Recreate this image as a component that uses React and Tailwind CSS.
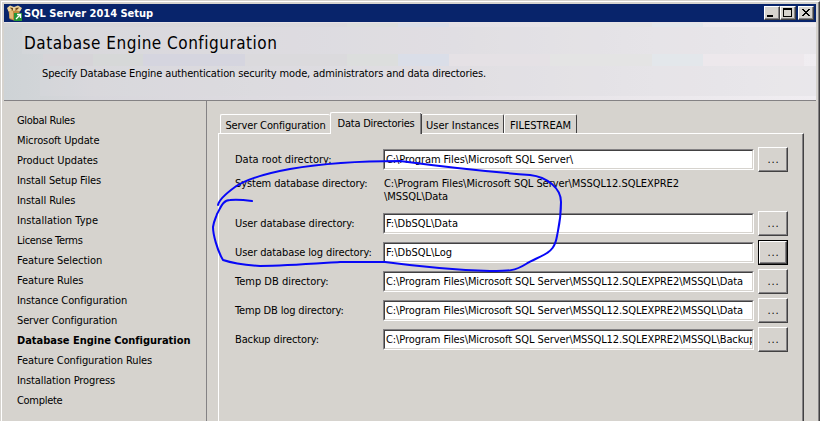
const STEPS = [
  ["Global Rules", "tracking-[-0.3px]"],
  ["Microsoft Update", "tracking-[-0.1px]"],
  ["Product Updates", "tracking-[-0.05px]"],
  ["Install Setup Files", "tracking-[-0.13px]"],
  ["Install Rules", "tracking-[-0.1px]"],
  ["Installation Type", "tracking-[0.03px]"],
  ["License Terms", "tracking-[-0.3px]"],
  ["Feature Selection", "tracking-[-0.05px]"],
  ["Feature Rules", "tracking-[-0.05px]"],
  ["Instance Configuration", "tracking-[-0.1px]"],
  ["Server Configuration", "tracking-[-0.13px]"],
  ["Database Engine Configuration", "font-bold tracking-[-0.02px]"],
  ["Feature Configuration Rules", "tracking-[-0.08px]"],
  ["Installation Progress", "tracking-[-0.1px]"],
  ["Complete", "tracking-[-0.3px]"],
];

const BASE = "C:\\Program Files\\Microsoft SQL Server\\";

const FIELDS = [
  { label: "User database directory:", labelStyle: "tracking-[-0.08px]", value: "F:\\DbSQL\\Data" },
  { label: "User database log directory:", labelStyle: "tracking-[-0.11px]", value: "F:\\DbSQL\\Log", focused: true },
  { label: "Temp DB directory:", value: BASE + "MSSQL12.SQLEXPRE2\\MSSQL\\Data", valueStyle: "tracking-[-0.09px]" },
  { label: "Temp DB log directory:", labelStyle: "tracking-[-0.15px]", value: BASE + "MSSQL12.SQLEXPRE2\\MSSQL\\Data", valueStyle: "tracking-[-0.09px]" },
  { label: "Backup directory:", labelStyle: "tracking-[-0.13px]", value: BASE + "MSSQL12.SQLEXPRE2\\MSSQL\\Backup", valueStyle: "tracking-[-0.09px]" },
];

function Bevel({ className = "", children }) {
  return (
    <div className={"border border-t-white border-l-white border-r-[#424142] border-b-[#424142] " + className}>
      <div className="flex h-full w-full items-center justify-center border-r border-b border-[#848284]">{children}</div>
    </div>
  );
}

function BrowseButton({ focused }) {
  return (
    <button className={"ml-1 h-[25px] w-[30px] shrink-0 " + (focused ? "border border-black" : "")}>
      <Bevel className="h-full w-full">
        <span className="pt-px pl-0.5 tracking-[0.85px]">...</span>
      </Bevel>
    </button>
  );
}

function Field({ label, labelStyle = "", value, valueStyle = "", focused }) {
  return (
    <div className="flex h-[25px] items-center">
      <label className={"w-[148px] shrink-0 whitespace-nowrap " + labelStyle}>{label}</label>
      <div className="h-[21px] w-[371px] border border-t-[#848284] border-l-[#848284] border-r-white border-b-white">
        <div className="flex h-full items-center overflow-hidden border border-t-[#424142] border-l-[#424142] border-r-[#d6d3ce] border-b-[#d6d3ce] bg-white pl-px">
          <span className={"w-full overflow-hidden whitespace-nowrap " + valueStyle}>{value}</span>
        </div>
      </div>
      <BrowseButton focused={focused} />
    </div>
  );
}

function Tab({ className, children }) {
  return (
    <div className={"flex h-[19px] items-center justify-center rounded-t-[2px] border-t border-white pt-0.5 whitespace-nowrap " + className}>
      {children}
    </div>
  );
}

function SetupIcon() {
  return (
    <svg width="15" height="16" viewBox="0 0 15 16" className="shrink-0">
      <path d="M1.500 5h11v9l-5.500 1.500L2.500 14z" fill="#c08a3e" />
      <path d="M2.500 6H6v8l-3.500-1z" fill="#e3b874" />
      <path d="M0 3l3-2.500L7 2l4-1.500L15 3l-2 3.500L8.500 5 7 6 5.500 5 1.500 6.500z" fill="#ead19a" />
      <path d="M3 2.500L6 3v2.500L4 4zM12 2.500L8.500 3v2.500L11 4z" fill="#6e4a1c" />
      <rect x="7" y="8" width="8" height="8" fill="#279538" />
      <path d="M9 14l4-4M10 9.500h3.500V13" fill="none" stroke="#fff" strokeWidth="1.300" />
    </svg>
  );
}

export default function App() {
  return (
    <div className="relative h-[421px] w-[820px] overflow-hidden bg-[#d6d3ce] pt-px pl-px font-['DejaVu_Sans_Condensed','DejaVu_Sans',sans-serif] text-[11px] leading-[13px] text-black">
      <div className="h-[420px] border-t border-r border-l border-t-white border-l-white border-r-[#424142]">
        <div className="h-full border-r border-[#848284] pt-0.5 pr-0.5 pl-0.5">
          <header className="flex h-[18px] items-center bg-[#08246b] pl-[3px] pr-0.5">
            <SetupIcon />
            <h1 className="ml-0.5 flex-1 text-[11px] font-bold text-white">SQL Server 2014 Setup</h1>
            <Bevel className="h-3.5 w-4 bg-[#d6d3ce]">
              <i className="mt-1.5 mr-1 h-0.5 w-1.5 bg-black" />
            </Bevel>
            <Bevel className="h-3.5 w-4 bg-[#d6d3ce]">
              <i className="h-[9px] w-[9px] border border-t-2 border-black" />
            </Bevel>
            <Bevel className="ml-0.5 h-3.5 w-4 bg-[#d6d3ce]">
              <svg width="8" height="7" viewBox="0 0 8 7" shapeRendering="crispEdges">
                <path d="M0 0h2v1h1v1h2V1h1V0h2v1H7v1H6v1H5v1h1v1h1v1h1v1H6V6H5V5H3v1H2v1H0V6h1V5h1V4h1V3H2V2H1V1H0z" />
              </svg>
            </Bevel>
          </header>

          <section className="relative h-[79px] border-t border-b border-t-[#e7e3e7] border-b-[#848284] bg-[linear-gradient(90deg,#ced3d6_0px,#d2d5d8_40px,#d8d7dc_90px,#dddbe0_250px,#e3e0e5_450px,#eae7eb_620px,#f0edf1_812px)]">
            <div className="flex h-full flex-col">
              <div className="flex h-1">
                <i className="w-[343px] bg-[#d6d6d8]/40" />
                <i className="w-[51px] bg-[#dcdedd]" />
                <i className="w-[51px] bg-[#dadee8]" />
                <i className="w-[101px]" />
                <i className="w-[102px] bg-[#e4e4e4]" />
                <i className="w-[51px] bg-[#e3e7eb]" />
              </div>
              <div className="ml-[18px] h-[27px] bg-[#dcd9df]/30" />
              <div className="flex h-3">
                <i className="w-[39px]" />
                <i className="w-[50px] bg-[#d6d4d8]" />
                <i className="w-[50px] bg-[#d6d8d8]" />
                <i className="w-[102px] bg-[#d5d5df]" />
                <i className="w-[102px] bg-[#dbdadd]" />
                <i className="w-[51px] bg-[#dcdedd]" />
                <i className="w-[51px] bg-[#dadee8]" />
                <i className="w-[101px] bg-[#e5e1e5]" />
                <i className="w-[102px] bg-[#e4e4e4]" />
                <i className="w-[51px] bg-[#e3e7eb]" />
                <i className="w-[101px] bg-[#ede8ec]" />
              </div>
              <div className="ml-9 h-[30px] bg-[#dcd9df]/30" />
            </div>
            <div className="absolute inset-0 pl-5">
              <h2 className="pt-2.5 text-[17px] leading-5 tracking-[0.5px]">Database Engine Configuration</h2>
              <p className="mt-3.5 pl-[18px] tracking-[-0.14px]">
                Specify Database Engine authentication security mode, administrators and data directories.
              </p>
            </div>
          </section>

          <div className="flex h-[320px]">
            <nav className="w-[203px] shrink-0 border-r border-[#848284] pt-[9px] pl-[13px]">
              {STEPS.map(([name, style]) => (
                <div key={name} className={"flex h-5 items-center whitespace-nowrap " + style}>{name}</div>
              ))}
            </nav>
            <main className="pt-[11px] pl-[11px]">
              <div className="flex h-[21px] items-end pl-0.5">
                <Tab className="w-[110px] border-l tracking-[-0.13px]">Server Configuration</Tab>
                <div className="relative z-10 -mb-px flex h-[22px] w-[92px] rounded-t-[2px] border-t border-l border-white bg-[#d6d3ce]">
                  <div className="flex-1 border-r border-[#848284] pl-px text-center leading-[22px] tracking-[-0.22px]">Data Directories</div>
                  <i className="mt-px w-px bg-[#424142]" />
                </div>
                <Tab className="w-[82px] border-r border-r-[#424142]">User Instances</Tab>
                <Tab className="w-[73px] border-l border-r border-r-[#424142]">FILESTREAM</Tab>
              </div>
              <div className="h-[288px] w-[586px] border-t border-r border-l border-t-white border-l-white border-r-[#424142]">
                <div className="h-full border-r border-[#848284] pt-[13px] pl-4">
                  <Field label="Data root directory:" value={BASE} valueStyle="tracking-[-0.08px]" />
                  <div className="flex h-[39px] pt-[5px]">
                    <span className="w-[149px] tracking-[-0.13px]">System database directory:</span>
                    <span className="whitespace-nowrap tracking-[-0.06px]">{BASE}MSSQL12.SQLEXPRE2<br />\MSSQL\Data</span>
                  </div>
                  <div className="flex flex-col gap-1">
                    {FIELDS.map((field) => <Field key={field.label} {...field} />)}
                  </div>
                </div>
              </div>
            </main>
          </div>
        </div>
      </div>

      <svg className="pointer-events-none absolute inset-0" width="820" height="421" fill="none" stroke="#0808f7" strokeWidth="2" strokeLinecap="round" strokeLinejoin="round">
        <path d="M218 205C219 200 224 195 235 187C248 178 268 173 290 169C325 163 365 161 400 161C430 165 480 171 530 175C547 177 561 188 561 202C561 220 558 230 557 236C555 248 550 251 547 253C541 257 532 260 526 264C515 271 509 271 490 271C455 270 415 266 385 262H340C310 264 285 266 260 266C245 265 232 263 223 260C217 250 213 234 213 227C214 220 216 218 217 214C221 207 223 200 230 200C237 199 245 200 252 201" />
      </svg>
    </div>
  );
}
